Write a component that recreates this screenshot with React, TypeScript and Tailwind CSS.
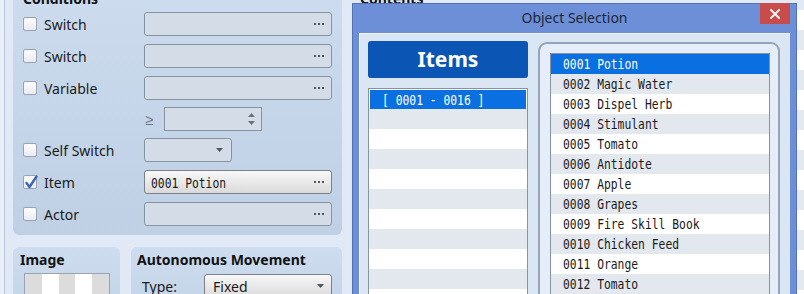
import React from "react";

const sans = "font-['Noto_Sans',sans-serif]";
const mono = "font-['DejaVu_Sans_Mono',monospace]";

function Dots() {
  return (
    <div className="flex gap-[2px]">
      <span className="w-[2px] h-[2px] bg-[#4d5664]" />
      <span className="w-[2px] h-[2px] bg-[#4d5664]" />
      <span className="w-[2px] h-[2px] bg-[#4d5664]" />
    </div>
  );
}

function Arrow() {
  return (
    <svg width="7" height="4" viewBox="0 0 7 4">
      <path d="M0 0 L7 0 L3.5 4 Z" fill="#4d5664" />
    </svg>
  );
}

function Mono({ children, className = "" }: { children: React.ReactNode; className?: string }) {
  return (
    <span className={`${mono} inline-block text-[14px] leading-[18px] whitespace-pre scale-x-[0.81] origin-left ${className}`}>
      {children}
    </span>
  );
}

function Checkbox({ checked = false }: { checked?: boolean }) {
  return (
    <div className="relative w-[14px] h-[14px] rounded-[2px] border border-[#9aa3af] bg-gradient-to-b from-[#fdfdfe] to-[#e8ecf1] shrink-0">
      {checked && (
        <svg className="absolute left-[0px] top-[-2px]" width="15" height="16" viewBox="0 0 15 16">
          <path d="M2.5 9 L5.5 13 L12.5 2.5" stroke="#3b66b6" strokeWidth="2.4" fill="none" strokeLinecap="round" strokeLinejoin="round" />
        </svg>
      )}
    </div>
  );
}

function Field({ children, active = false }: { children?: React.ReactNode; active?: boolean }) {
  return (
    <div
      className={`w-[188px] h-[24px] rounded-[3px] border flex items-center pl-[6px] pr-[7px] ${
        active
          ? "border-[#7d8087] bg-gradient-to-b from-[#f8f8f8] to-[#dadada]"
          : "border-[#8792a2] bg-[#d4dde7]"
      }`}
    >
      <div className="flex-1 text-[#1a1a1a]">{children}</div>
      <Dots />
    </div>
  );
}

function CondRow({ label, checked, children }: { label: string; checked?: boolean; children: React.ReactNode }) {
  return (
    <div className="h-[32px] flex items-center">
      <div className="w-[121px] flex items-center gap-[7px]">
        <Checkbox checked={checked} />
        <span className="text-[14px] text-[#1a1a1a]">{label}</span>
      </div>
      {children}
    </div>
  );
}

const items = [
  "0001 Potion",
  "0002 Magic Water",
  "0003 Dispel Herb",
  "0004 Stimulant",
  "0005 Tomato",
  "0006 Antidote",
  "0007 Apple",
  "0008 Grapes",
  "0009 Fire Skill Book",
  "0010 Chicken Feed",
  "0011 Orange",
  "0012 Tomato",
];

export default function App() {
  return (
    <div className={`${sans} relative w-[804px] h-[294px] overflow-hidden bg-[#e0e9f5] flex`}>
      {/* left margin */}
      <div className="flex shrink-0">
        <div className="w-[4px] bg-[#e8eff8]" />
        <div className="w-[1px] bg-[#b8c7d9]" />
        <div className="w-[8px]" />
      </div>

      {/* left column */}
      <div className="w-[329px] shrink-0 flex flex-col mt-[-20px]">
        <div className="shrink-0 rounded-[6px] bg-gradient-to-b from-[#cddcee] to-[#bfd0e5] px-[10px] pt-[9px] pb-[5px]">
          <div className="h-[19px] leading-[19px] text-[14px] font-bold text-[#111]">Conditions</div>
          <CondRow label="Switch">
            <Field />
          </CondRow>
          <CondRow label="Switch">
            <Field />
          </CondRow>
          <CondRow label="Variable">
            <Field />
          </CondRow>
          <div className="h-[30px] flex items-center">
            <div className="w-[121px]" />
            <span className="text-[15px] leading-[15px] text-[#6a7280] w-[20px] pl-[1px]">≥</span>
            <div className="w-[98px] h-[24px] border border-[#8792a2] bg-[#d4dde7] flex items-center justify-end pr-[6px]">
              <div className="flex flex-col gap-[4px]">
                <svg width="7" height="4" viewBox="0 0 7 4">
                  <path d="M0 4 L7 4 L3.5 0 Z" fill="#6a7280" />
                </svg>
                <svg width="7" height="4" viewBox="0 0 7 4">
                  <path d="M0 0 L7 0 L3.5 4 Z" fill="#6a7280" />
                </svg>
              </div>
            </div>
          </div>
          <div className="h-[32px] flex items-center">
            <div className="w-[121px] flex items-center gap-[7px]">
              <Checkbox />
              <span className="text-[14px] text-[#1a1a1a]">Self Switch</span>
            </div>
            <div className="w-[88px] h-[24px] rounded-[3px] border border-[#8792a2] bg-[#d4dde7] flex items-center justify-end pr-[8px]">
              <Arrow />
            </div>
          </div>
          <CondRow label="Item" checked>
            <Field active>
              <Mono>0001 Potion</Mono>
            </Field>
          </CondRow>
          <CondRow label="Actor">
            <Field />
          </CondRow>
        </div>

        <div className="mt-[12px] flex gap-[11px] flex-1">
          <div className="w-[107px] rounded-t-[6px] bg-gradient-to-b from-[#cddcee] to-[#c4d5e9] pt-[3px]">
            <div className="pl-[7px] h-[20px] leading-[20px] text-[14px] font-bold text-[#111]">Image</div>
            <div className="ml-[11px] mt-[3px] w-[86px] h-[36px] border border-[#9aa3af] bg-white grid grid-cols-5 grid-rows-2 overflow-hidden">
              {Array.from({ length: 10 }).map((_, i) => (
                <div
                  key={i}
                  className={`${(i + Math.floor(i / 5)) % 2 === 0 ? "bg-[#dcdcdc]" : "bg-white"}`}
                />
              ))}
            </div>
          </div>
          <div className="w-[211px] rounded-t-[6px] bg-gradient-to-b from-[#cddcee] to-[#c4d5e9] pt-[3px]">
            <div className="pl-[6px] h-[20px] leading-[20px] text-[14px] font-bold text-[#111]">Autonomous Movement</div>
            <div className="mt-[4px] flex items-center">
              <div className="w-[73px] pl-[11px] text-[14px] text-[#1a1a1a]">Type:</div>
              <div className="w-[128px] h-[24px] rounded-[3px] border border-[#7d8087] bg-gradient-to-b from-[#f8f8f8] to-[#dadada] flex items-center pl-[8px] pr-[7px]">
                <span className="flex-1 text-[14px] text-[#1a1a1a]">Fixed</span>
                <Arrow />
              </div>
            </div>
          </div>
        </div>
      </div>

      {/* right background area */}
      <div className="flex-1 flex flex-col">
        <div className="pl-[18px] mt-[-11px] h-[19px] leading-[19px] text-[14px] font-bold text-[#111]">Contents</div>
        <div className="ml-[430px] mt-[2px] flex flex-col">
          {Array.from({ length: 15 }).map((_, i) => (
            <div key={i} className={`h-[20px] ${i % 2 === 0 ? "bg-white" : "bg-[#e4e9ef]"}`} />
          ))}
        </div>
      </div>

      {/* dialog */}
      <div className="absolute left-[352px] top-[3px] w-[445px] bg-[#6c8fd7] border border-[#5373b6] flex flex-col">
        <div className="relative shrink-0 h-[29px] flex items-center justify-center">
          <span className="text-[14px] text-[#1c2638] pb-[3px]">Object Selection</span>
          <div className="absolute right-[6px] top-[-1px] w-[30px] h-[21px] bg-[#c94c4c] flex items-center justify-center">
            <svg width="10" height="10" viewBox="0 0 10 10">
              <path d="M1 1 L9 9 M9 1 L1 9" stroke="#ffffff" strokeWidth="1.8" strokeLinecap="square" />
            </svg>
          </div>
        </div>
        <div className="mx-[6px] bg-[#dae6f4] border-l border-t border-[#f3f7fc] pl-[8px] pt-[7px] flex">
          {/* left column */}
          <div className="w-[160px] shrink-0 flex flex-col">
            <div className="shrink-0 h-[37px] rounded-[3px] bg-[#0b56b4] flex items-center justify-center text-white text-[21px] font-bold">
              Items
            </div>
            <div className="mt-[10px] border border-[#8793a5] bg-white flex flex-col">
              {Array.from({ length: 12 }).map((_, i) => (
                <div
                  key={i}
                  className={`shrink-0 flex items-center pl-[12px] ${
                    i === 0 ? "bg-[#0a6fe0] text-white mx-[1px] mt-[1px] h-[19px]" : i % 2 === 1 ? "h-[20px] bg-[#e3e8ee]" : "h-[20px] bg-white"
                  }`}
                >
                  {i === 0 && <Mono>[ 0001 - 0016 ]</Mono>}
                </div>
              ))}
            </div>
          </div>
          {/* right group */}
          <div className="ml-[10px] mt-[1px] w-[242px] shrink-0 rounded-[9px] border-2 border-[#97a4b7] bg-[#e4edf8] pl-[10px] pt-[9px] pb-[20px]">
            <div className="w-[220px] border border-[#8793a5] bg-white flex flex-col">
              {items.map((t, i) => (
                <div
                  key={t}
                  className={`shrink-0 h-[20px] flex items-center pl-[12px] ${
                    i === 0 ? "bg-[#0a6fe0] text-white" : i % 2 === 1 ? "bg-[#e3e8ee] text-[#1a1a1a]" : "bg-white text-[#1a1a1a]"
                  }`}
                >
                  <Mono>{t}</Mono>
                </div>
              ))}
            </div>
          </div>
        </div>
      </div>
    </div>
  );
}
